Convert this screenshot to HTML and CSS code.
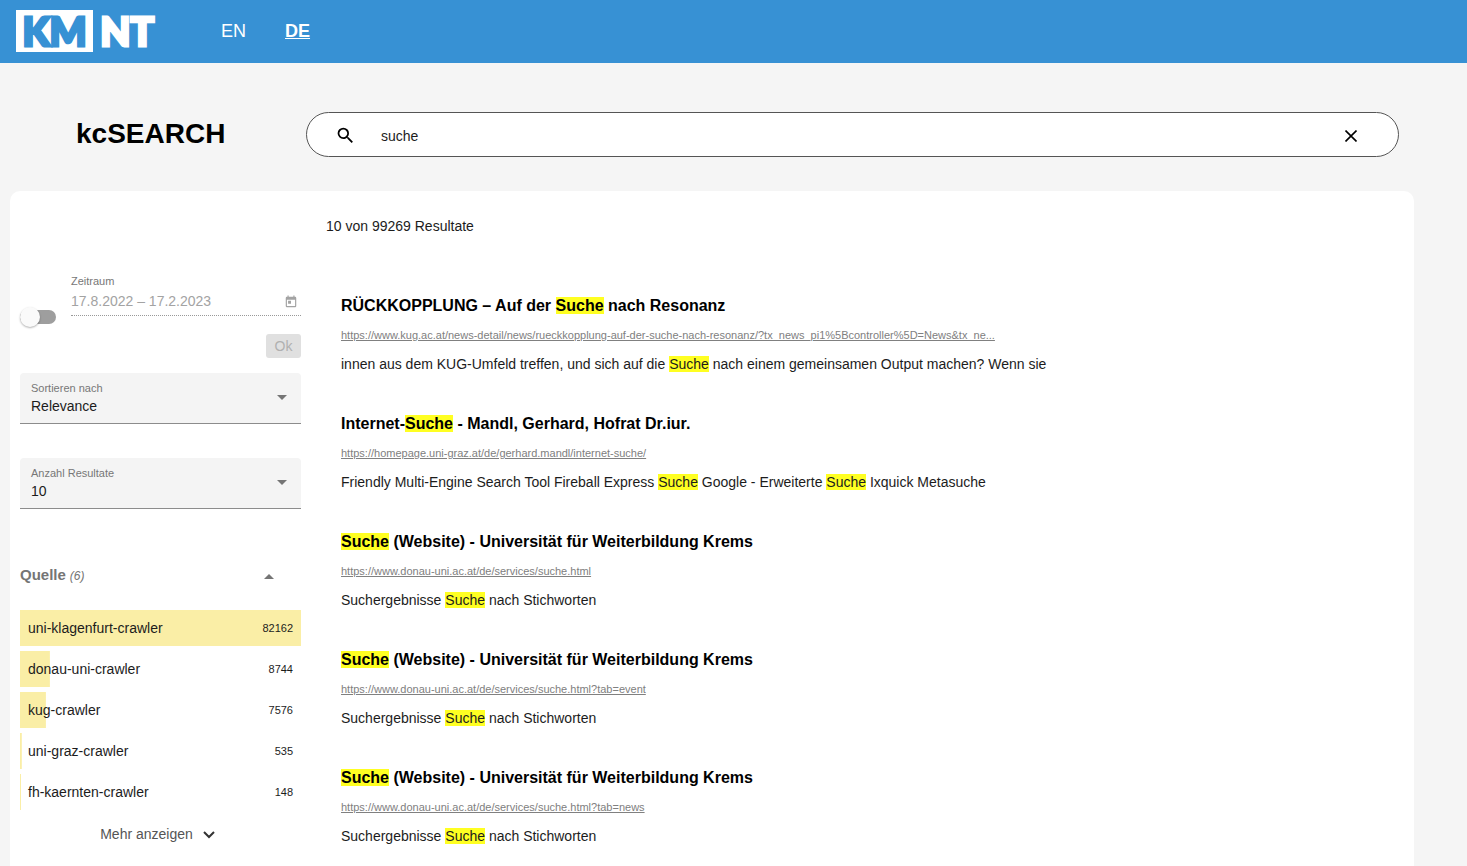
FILE: index.html
```html
<!DOCTYPE html>
<html lang="de">
<head>
<meta charset="utf-8">
<title>kcSEARCH</title>
<meta name="viewport" content="width=device-width, initial-scale=1">
<link rel="stylesheet" href="styles.css">
</head>
<body>
<header class="topbar">
  <a class="logo" href="#" aria-label="KMNT"><span class="logo-box">KM</span><span class="logo-rest">NT</span></a>
  <nav class="languages">
    <a href="#en">EN</a>
    <a class="active" href="#de">DE</a>
  </nav>
</header>

<div class="search-row">
  <h1 class="title">kcSEARCH</h1>
  <form class="search" role="search">
    <svg class="search-icon" viewBox="0 0 24 24" aria-hidden="true"><path d="M15.5 14h-.79l-.28-.27A6.471 6.471 0 0 0 16 9.500 6.500 6.500 0 1 0 9.500 16c1.610 0 3.090-.59 4.230-1.570l.27.28v.79l5 4.990L20.490 19l-4.990-5zm-6 0C7.010 14 5 11.990 5 9.500S7.010 5 9.500 5 14 7.010 14 9.500 11.990 14 9.500 14z"/></svg>
    <input class="search-input" type="text" value="suche" aria-label="Suchbegriff">
    <button class="clear" type="button" aria-label="Eingabe löschen"><svg viewBox="0 0 12 12" aria-hidden="true"><path d="M.5.5l11 11M11.5.5l-11 11"/></svg></button>
  </form>
</div>

<main class="panel">
  <aside class="filters">
    <div class="period">
      <label class="toggle"><input type="checkbox" role="switch" aria-label="Zeitraum aktivieren"></label>
      <div class="period-field">
        <label class="small-label" for="period">Zeitraum</label>
        <div class="period-line">
          <input id="period" class="period-input" type="text" value="17.8.2022 – 17.2.2023" disabled>
          <svg class="calendar" viewBox="0 0 24 24" aria-hidden="true"><path d="M19 3h-1V1h-2v2H8V1H6v2H5a2 2 0 0 0-2 2v14a2 2 0 0 0 2 2h14a2 2 0 0 0 2-2V5a2 2 0 0 0-2-2zm0 16H5V8h14v11zM7 10h5v5H7z"/></svg>
        </div>
      </div>
    </div>
    <button class="ok" type="button" disabled>Ok</button>

    <div class="field">
      <label class="small-label" for="sort">Sortieren nach</label>
      <select id="sort"><option>Relevance</option></select>
      <svg class="arrow" viewBox="0 0 10 5" aria-hidden="true"><path d="M0 0h10L5 5z"/></svg>
    </div>
    <div class="field">
      <label class="small-label" for="count">Anzahl Resultate</label>
      <select id="count"><option>10</option></select>
      <svg class="arrow" viewBox="0 0 10 5" aria-hidden="true"><path d="M0 0h10L5 5z"/></svg>
    </div>

    <button class="facet-head" type="button" aria-expanded="true">
      <span><b>Quelle</b> <i>(6)</i></span>
      <svg viewBox="0 0 10 5" aria-hidden="true"><path d="M0 5h10L5 0z"/></svg>
    </button>
    <ul class="facets">
      <li><button class="facet" type="button" style="--share:100%"><span>uni-klagenfurt-crawler</span><span class="num">82162</span></button></li>
      <li><button class="facet" type="button" style="--share:10.64%"><span>donau-uni-crawler</span><span class="num">8744</span></button></li>
      <li><button class="facet" type="button" style="--share:9.22%"><span>kug-crawler</span><span class="num">7576</span></button></li>
      <li><button class="facet" type="button" style="--share:0.65%"><span>uni-graz-crawler</span><span class="num">535</span></button></li>
      <li><button class="facet" type="button" style="--share:0.18%"><span>fh-kaernten-crawler</span><span class="num">148</span></button></li>
    </ul>
    <button class="more" type="button">Mehr anzeigen <svg viewBox="0 0 12 8" aria-hidden="true"><path d="M1 1l5 5 5-5"/></svg></button>
  </aside>

  <section class="results">
    <p class="summary">10 von 99269 Resultate</p>
    <article class="result">
      <h2>RÜCKKOPPLUNG – Auf der <mark>Suche</mark> nach Resonanz</h2>
      <a href="#r1">https://www.kug.ac.at/news-detail/news/rueckkopplung-auf-der-suche-nach-resonanz/?tx_news_pi1%5Bcontroller%5D=News&amp;tx_ne...</a>
      <p>innen aus dem KUG-Umfeld treffen, und sich auf die <mark>Suche</mark> nach einem gemeinsamen Output machen? Wenn sie</p>
    </article>
    <article class="result">
      <h2>Internet-<mark>Suche</mark> - Mandl, Gerhard, Hofrat Dr.iur.</h2>
      <a href="#r2">https://homepage.uni-graz.at/de/gerhard.mandl/internet-suche/</a>
      <p>Friendly Multi-Engine Search Tool Fireball Express <mark>Suche</mark> Google - Erweiterte <mark>Suche</mark> Ixquick Metasuche</p>
    </article>
    <article class="result">
      <h2><mark>Suche</mark> (Website) - Universität für Weiterbildung Krems</h2>
      <a href="#r3">https://www.donau-uni.ac.at/de/services/suche.html</a>
      <p>Suchergebnisse <mark>Suche</mark> nach Stichworten</p>
    </article>
    <article class="result">
      <h2><mark>Suche</mark> (Website) - Universität für Weiterbildung Krems</h2>
      <a href="#r4">https://www.donau-uni.ac.at/de/services/suche.html?tab=event</a>
      <p>Suchergebnisse <mark>Suche</mark> nach Stichworten</p>
    </article>
    <article class="result">
      <h2><mark>Suche</mark> (Website) - Universität für Weiterbildung Krems</h2>
      <a href="#r5">https://www.donau-uni.ac.at/de/services/suche.html?tab=news</a>
      <p>Suchergebnisse <mark>Suche</mark> nach Stichworten</p>
    </article>
  </section>
</main>
</body>
</html>
```

FILE: styles.css
```css
* { box-sizing: border-box; }

body {
  display: flex;
  flex-direction: column;
  min-height: 100vh;
  margin: 0;
  background: #f5f5f5;
  color: #1c1c1c;
  font: 14px/20px "Liberation Sans", Arial, sans-serif;
}

h1, h2, p, ul { margin: 0; padding: 0; }
button, input, select { font: inherit; color: inherit; }
button { border: 0; padding: 0; background: none; text-align: left; }
svg { display: block; }

.topbar {
  display: flex;
  align-items: center;
  gap: 67px;
  height: 63px;
  padding: 0 16px 2px;
  background: #3791d4;
}

.logo {
  display: flex;
  align-items: center;
  justify-content: space-between;
  width: 138px;
  color: #fff;
  font: 900 39px/42px Lato, sans-serif;
  text-decoration: none;
  -webkit-text-stroke: 3px currentColor;
}
.logo-box {
  width: 77px;
  background: #fff;
  color: #3791d4;
  text-align: center;
}

.languages { display: flex; gap: 39px; font-size: 18px; }
.languages a { color: #fff; text-decoration: none; }
.languages .active { font-weight: bold; text-decoration: underline; }

.search-row {
  display: flex;
  align-items: center;
  padding: 49px 68px 34px 76px;
}
.title {
  flex: 0 0 230px;
  padding-bottom: 2px;
  color: #000;
  font-size: 28px;
  line-height: 32px;
}
.search {
  display: flex;
  flex: 1;
  align-items: center;
  height: 45px;
  padding: 0 41px 0 28px;
  border: 1px solid #555;
  border-radius: 23px;
  background: #fff;
}
.search-icon { width: 21px; height: 21px; margin-top: 2px; }
.search-input {
  flex: 1;
  min-width: 0;
  margin-left: 25px;
  padding: 2px 0 0;
  border: 0;
  outline: 0;
  background: none;
}
.clear svg { width: 12px; height: 12px; margin-top: 2px; stroke: #000; stroke-width: 1.6; fill: none; }

.panel {
  display: flex;
  flex: 1;
  gap: 25px;
  margin: 0 53px 0 10px;
  padding: 25px 10px 12px;
  border-radius: 10px 10px 0 0;
  background: #fff;
}

.filters {
  display: flex;
  flex: 0 0 281px;
  flex-direction: column;
  padding-top: 57px;
}
.small-label { color: #777; font-size: 11px; line-height: 16px; }

.period { display: flex; align-items: flex-end; gap: 15px; }
.toggle { height: 14px; margin-bottom: -8px; }
.toggle input {
  position: relative;
  display: block;
  width: 36px;
  height: 14px;
  margin: 0;
  border-radius: 7px;
  background: #9e9e9e;
  appearance: none;
}
.toggle input::before {
  position: absolute;
  top: -3px;
  left: 0;
  width: 20px;
  height: 20px;
  border-radius: 50%;
  background: #fafafa;
  box-shadow: 0 1px 2px rgba(0, 0, 0, .3);
  content: "";
}
.period-field { flex: 1; min-width: 0; }
.period-field .small-label { display: block; }
.period-line {
  display: flex;
  align-items: center;
  height: 27px;
  padding: 0 3px 3px 0;
  border-bottom: 1px dotted #999;
}
.period-input {
  flex: 1;
  min-width: 0;
  padding: 0;
  border: 0;
  background: none;
  color: #a3a3a3;
}
.calendar { width: 14px; height: 14px; margin-top: 3px; fill: #a3a3a3; }

.ok {
  align-self: flex-end;
  width: 35px;
  height: 24px;
  margin: 18px 0 15px;
  border-radius: 3px;
  background: #e0e0e0;
  color: #b0b0b0;
  text-align: center;
}

.field {
  position: relative;
  display: flex;
  flex-direction: column;
  height: 51px;
  margin-bottom: 34px;
  padding: 7px 0 0;
  border-bottom: 1px solid #8c8c8c;
  border-radius: 4px 4px 0 0;
  background: #f4f4f4;
}
.field .small-label { padding-left: 11px; }
.field select {
  height: 16px;
  padding: 0 30px 0 11px;
  border: 0;
  background: none;
  appearance: none;
}
.arrow { position: absolute; top: 22px; right: 14px; width: 10px; height: 5px; fill: #757575; }

.facet-head {
  display: flex;
  align-items: center;
  justify-content: space-between;
  margin: 22px 0 24px;
  padding-right: 27px;
  color: #757575;
}
.facet-head b { font-size: 15px; }
.facet-head i { font-size: 12px; }
.facet-head svg { width: 10px; height: 5px; margin-top: 2px; fill: #757575; }

.facets { display: grid; gap: 5px; list-style: none; }
.facet {
  display: flex;
  align-items: center;
  justify-content: space-between;
  width: 100%;
  height: 36px;
  padding: 0 8px;
  background: linear-gradient(#faeea6, #faeea6) 0 0 / max(1px, var(--share)) 100% no-repeat;
}
.num { font-size: 11px; }

.more {
  display: flex;
  align-items: center;
  align-self: center;
  gap: 10px;
  margin-top: 14px;
  padding-right: 6px;
  color: #555;
}
.more svg { width: 12px; height: 8px; margin-top: 2px; stroke: #333; stroke-width: 2; fill: none; }

.results { flex: 1; min-width: 0; }
.result { padding-left: 15px; margin-bottom: 40px; }
.result:last-child { margin-bottom: 0; }
.summary { margin-bottom: 60px; }
.result h2 { color: #000; font-size: 16px; line-height: 20px; }
.result a {
  display: block;
  width: fit-content;
  margin: 9px 0;
  overflow-wrap: anywhere;
  color: #808080;
  font-size: 11px;
  line-height: 20px;
}
.result p { line-height: 20px; }
mark { background: #ff2; color: inherit; }
```
